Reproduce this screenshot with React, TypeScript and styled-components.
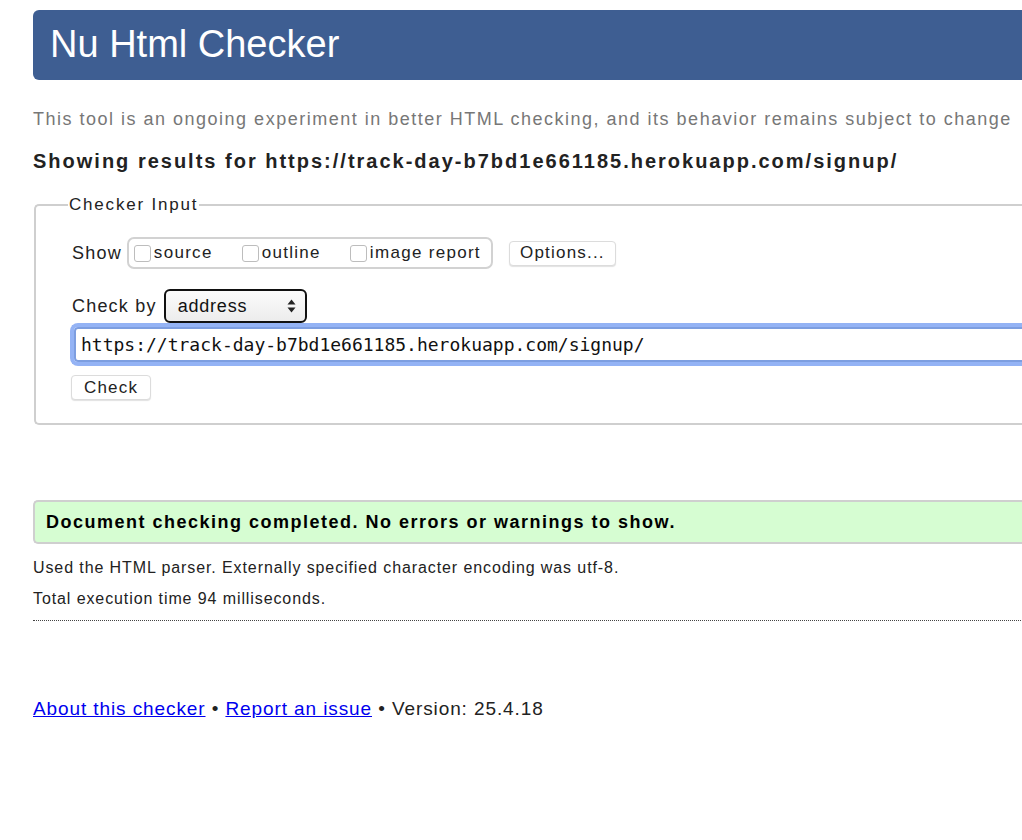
import React from "react";
import styled, { createGlobalStyle } from "styled-components";

const Global = createGlobalStyle`
  html, body { margin: 0; padding: 0; background: #fff; overflow: hidden; }
  body { font-family: "Liberation Sans", Arial, Helvetica, sans-serif; color: #222; }
`;

const Page = styled.div`
  width: 1200px;
  padding: 10px 0 0 33px;
  display: flex;
  flex-direction: column;
`;

const Header = styled.header`
  height: 70px;
  background: #3e5e92;
  border-radius: 6px 0 0 6px;
  display: flex;
  align-items: center;
  padding-left: 17px;
`;

const Title = styled.h1`
  margin: 0;
  color: #fff;
  font-weight: normal;
  font-size: 38px;
  line-height: 1;
  padding-bottom: 2px;
`;

const Intro = styled.p`
  margin: 30px 0 0;
  font-size: 18px;
  letter-spacing: 1.5px;
  color: #777;
  line-height: 1;
`;

const Showing = styled.h2`
  margin: 23px 0 0;
  font-size: 20px;
  letter-spacing: 2px;
  font-weight: bold;
  color: #222;
  line-height: 1;
`;

const Fieldset = styled.fieldset`
  margin: 24px 0 0 1px;
  padding: 22px 0 23px 36px;
  border: 2px solid #cfcfcf;
  border-right: none;
  border-radius: 5px 0 0 5px;
  display: flex;
  flex-direction: column;
`;

const Legend = styled.legend`
  font-size: 17px;
  letter-spacing: 1.8px;
  padding: 0 1px;
  margin-left: -4px;
  color: #222;
`;

const Row = styled.div<{ $gap?: number; $top?: number }>`
  display: flex;
  align-items: center;
  gap: ${(p) => p.$gap ?? 6}px;
  margin-top: ${(p) => p.$top ?? 0}px;
`;

const Label = styled.span`
  font-size: 18px;
  letter-spacing: 1.2px;
  color: #222;
`;

const CheckGroup = styled.div`
  display: flex;
  align-items: center;
  height: 28px;
  padding: 0 10px 0 5px;
  border: 2px solid #d2d2d2;
  border-radius: 7px;
  gap: 29px;
`;

const CheckItem = styled.label`
  display: flex;
  align-items: center;
  font-size: 17px;
  letter-spacing: 1.3px;
  color: #222;
`;

const Box = styled.span`
  width: 17px;
  height: 17px;
  border: 1px solid #bdbdbd;
  border-radius: 3px;
  background: #fff;
  margin-right: 3px;
  box-sizing: border-box;
`;

const Button = styled.button`
  font-family: "Liberation Sans", Arial, sans-serif;
  font-size: 17px;
  letter-spacing: 1.2px;
  color: #222;
  background: #fff;
  border: 1px solid #dcdcdc;
  border-radius: 4px;
  box-shadow: 0 1px 1px rgba(0, 0, 0, 0.12);
  height: 25px;
  padding: 0 12px;
  display: flex;
  align-items: center;
  justify-content: center;
`;

const OptionsButton = styled(Button)`
  width: 107px;
`;

const Select = styled.div`
  width: 143px;
  height: 34px;
  box-sizing: border-box;
  border: 2px solid #111;
  border-radius: 6px;
  background: linear-gradient(#fbfbfb, #ececec);
  display: flex;
  align-items: center;
  justify-content: space-between;
  padding: 0 9px 0 12px;
  font-size: 18px;
  letter-spacing: 0.8px;
  color: #111;
`;

const Arrows = styled.svg`
  width: 9px;
  height: 14px;
`;

const UrlInput = styled.div`
  margin: 0 0 0 -2px;
  height: 43px;
  box-sizing: border-box;
  border: 4px solid #94b3f5;
  border-right: none;
  border-radius: 8px 0 0 8px;
  display: flex;
  align-items: center;
  padding-left: 7px;
  font-family: "DejaVu Sans Mono", "Liberation Mono", monospace;
  font-size: 18px;
  color: #111;
  box-shadow: inset 0 0 0 2px #7d9ee0;
`;

const CheckButton = styled(Button)`
  align-self: flex-start;
  margin: 9px 0 0 -1px;
  width: 80px;
`;

const Result = styled.div`
  margin-top: 75px;
  height: 44px;
  box-sizing: border-box;
  background: #d6fdd2;
  border: 2px solid #cfcfcf;
  border-right: none;
  border-radius: 5px 0 0 5px;
  display: flex;
  align-items: center;
  padding-left: 11px;
  font-size: 18px;
  letter-spacing: 1.5px;
  font-weight: bold;
  color: #000;
`;

const Detail = styled.p<{ $top: number }>`
  margin: ${(p) => p.$top}px 0 0;
  font-size: 16px;
  letter-spacing: 0.9px;
  line-height: 1;
  color: #222;
`;

const Dotted = styled.hr`
  margin: 13px 0 0;
  border: none;
  border-top: 1px dotted #444;
  height: 0;
`;

const Footer = styled.footer`
  margin-top: 78px;
  font-size: 19px;
  letter-spacing: 0.9px;
  color: #222;
  line-height: 1;
`;

const Link = styled.a`
  color: #0000ee;
  text-decoration: underline;
`;

export default function App() {
  return (
    <>
      <Global />
      <Page>
        <Header>
          <Title>Nu Html Checker</Title>
        </Header>
        <Intro>
          This tool is an ongoing experiment in better HTML checking, and its behavior remains subject to change
        </Intro>
        <Showing>Showing results for https://track-day-b7bd1e661185.herokuapp.com/signup/</Showing>
        <Fieldset>
          <Legend>Checker Input</Legend>
          <Row $gap={16}>
            <Row $gap={5}>
              <Label>Show</Label>
              <CheckGroup>
                <CheckItem>
                  <Box />
                  source
                </CheckItem>
                <CheckItem>
                  <Box />
                  outline
                </CheckItem>
                <CheckItem>
                  <Box />
                  image report
                </CheckItem>
              </CheckGroup>
            </Row>
            <OptionsButton>Options...</OptionsButton>
          </Row>
          <Row $gap={7} $top={20}>
            <Label>Check by</Label>
            <Select>
              address
              <Arrows viewBox="0 0 9 14">
                <path d="M4.5 0.5 L8.5 5.5 H0.5 Z" fill="#222" />
                <path d="M4.5 13.5 L8.5 8.5 H0.5 Z" fill="#222" />
              </Arrows>
            </Select>
          </Row>
          <UrlInput>https://track-day-b7bd1e661185.herokuapp.com/signup/</UrlInput>
          <CheckButton>Check</CheckButton>
        </Fieldset>
        <Result>Document checking completed. No errors or warnings to show.</Result>
        <Detail $top={16}>Used the HTML parser. Externally specified character encoding was utf-8.</Detail>
        <Detail $top={15}>Total execution time 94 milliseconds.</Detail>
        <Dotted />
        <Footer>
          <Link href="#">About this checker</Link> • <Link href="#">Report an issue</Link> • Version: 25.4.18
        </Footer>
      </Page>
    </>
  );
}
